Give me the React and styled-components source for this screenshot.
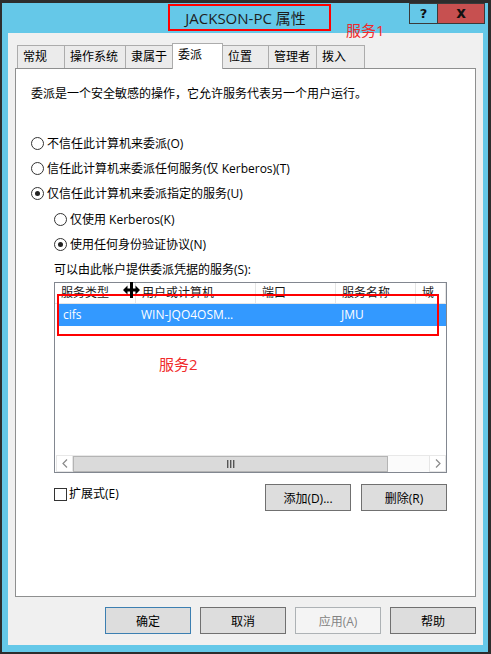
import React from "react";
import styled, { createGlobalStyle } from "styled-components";

const FONT = `"Open Sans", "Noto Sans CJK SC", sans-serif`;

const GlobalStyle = createGlobalStyle`
  html, body {
    margin: 0;
    padding: 0;
    background: #2d2d2d;
  }
  body {
    font-family: ${FONT};
    font-size: 12px;
    color: #000;
  }
  * {
    box-sizing: border-box;
  }
`;

const Window = styled.div`
  width: 491px;
  height: 654px;
  display: flex;
  flex-direction: column;
  background: #65c8e8;
  border-style: solid;
  border-color: #2d2d2d;
  border-width: 3px 3px 2px 2px;
`;

const TitleBar = styled.div`
  height: 30px;
  flex-shrink: 0;
  display: grid;
  grid-template-columns: 166px 163px 1fr;
`;

const Title = styled.div`
  grid-column: 2;
  margin-top: 1px;
  height: 27px;
  border: 2px solid #ff0000;
  padding-right: 8px;
  display: flex;
  align-items: center;
  justify-content: center;
  font-size: 15px;
  color: #1e1e1e;
  white-space: nowrap;
`;

const TitleRight = styled.div`
  display: flex;
  justify-content: space-between;
  padding-left: 15px;
`;

const Note = styled.span`
  position: relative;
  z-index: 2;
  font-size: 15px;
  line-height: 18px;
  color: #f02a2a;
  white-space: nowrap;
`;

const TitleNote = styled(Note)`
  margin-top: 18px;
`;

const CaptionButtons = styled.div`
  display: flex;
  align-self: flex-start;
  margin-right: 3px;
`;

const CaptionButton = styled.div`
  width: ${(p) => p.$width}px;
  height: 21px;
  margin-left: -1px;
  border: 1px solid #3a3a3a;
  background: ${(p) => (p.$close ? "#c75050" : "transparent")};
  display: flex;
  align-items: center;
  justify-content: center;
  font-family: "DejaVu Sans", sans-serif;
  font-weight: bold;
  font-size: ${(p) => (p.$close ? 15 : 13)}px;
  line-height: 1;
  color: #111;
`;

const Body = styled.div`
  flex: 1;
  margin: 0 5px 7px 6px;
  background: #f0f0f0;
  padding: 10px 7px 11px 7px;
  display: flex;
  flex-direction: column;
`;

const TabRow = styled.div`
  display: flex;
  align-items: flex-end;
  height: 25px;
  padding-left: 2px;
`;

const Tab = styled.div`
  position: relative;
  z-index: ${(p) => (p.$active ? 1 : 0)};
  width: ${(p) => p.$width}px;
  height: ${(p) => (p.$active ? 26 : 23)}px;
  margin-bottom: ${(p) => (p.$active ? -1 : 0)}px;
  margin-right: -1px;
  border: 1px solid #acacac;
  border-bottom: none;
  background: ${(p) => (p.$active ? "#ffffff" : "#ebebeb")};
  padding: 3px 0 0 5px;
  line-height: 16px;
  white-space: nowrap;
`;

const Panel = styled.div`
  flex: 1;
  background: #fff;
  border: 1px solid #8e8f8f;
  padding: 17px 15px 0 15px;
  display: flex;
  flex-direction: column;
`;

const Intro = styled.div`
  line-height: 16px;
`;

const Options = styled.div`
  margin-top: 33px;
  display: flex;
  flex-direction: column;
  gap: 9px;
`;

const OptionRow = styled.div`
  display: flex;
  align-items: center;
  height: 16px;
  margin-left: ${(p) => (p.$indent ? 23 : 0)}px;
  margin-top: ${(p) => p.$extra || 0}px;
  white-space: nowrap;
`;

const RadioCircle = styled.span`
  width: 13px;
  height: 13px;
  margin-right: 3px;
  border: 1px solid #333;
  border-radius: 50%;
  background: #fff;
  display: flex;
  align-items: center;
  justify-content: center;
  flex-shrink: 0;

  &::after {
    content: "";
    display: ${(p) => (p.$checked ? "block" : "none")};
    width: 5px;
    height: 5px;
    border-radius: 50%;
    background: #222;
  }
`;

const ListBox = styled.div`
  position: relative;
  margin: 5px 0 0 23px;
  width: 393px;
  height: 191px;
  border: 1px solid #828790;
  display: flex;
  flex-direction: column;
`;

const HeaderRow = styled.div`
  display: grid;
  grid-template-columns: 81px 120px 80px 80px 1fr;
  height: 21px;
  border-bottom: 1px solid #e5e5e5;
`;

const HeaderCell = styled.div`
  padding-left: 6px;
  line-height: 20px;
  border-right: 1px solid #e5e5e5;
  overflow: hidden;
  white-space: nowrap;
  color: #1a1a1a;
`;

const ListBody = styled.div`
  flex: 1;
`;

const DataRow = styled.div`
  display: grid;
  grid-template-columns: 78px 120px 80px 80px 1fr;
  height: 22px;
  margin-left: 2px;
  background: #3399ff;
  color: #fff;
`;

const DataCell = styled.div`
  padding-left: 6px;
  line-height: 22px;
  white-space: nowrap;
  overflow: hidden;
`;

const ScrollBar = styled.div`
  height: 17px;
  margin-left: 1px;
  display: flex;
  border-top: 1px solid #e8e8e8;
  background: #fff;
`;

const ScrollArrow = styled.div`
  width: 17px;
  display: flex;
  align-items: center;
  justify-content: center;
  background: #fff;
  border: 1px solid #e6e6e6;
  border-top: none;
`;

const Thumb = styled.div`
  width: ${(p) => p.$width}px;
  background: #dadada;
  border: 1px solid #b4b4b4;
  display: flex;
  align-items: center;
  justify-content: center;
`;

const Track = styled.div`
  flex: 1;
  background: #fbfbfb;
`;

const Box = styled.div`
  position: absolute;
  left: 2px;
  top: 11px;
  width: 382px;
  height: 42px;
  border: 2px solid #ff0000;
`;

const ListNote = styled(Note)`
  position: absolute;
  left: 104px;
  top: 72px;
`;

const Cursor = styled.svg`
  position: absolute;
  left: 68px;
  top: -1px;
  z-index: 3;
`;

const FooterRow = styled.div`
  margin: 11px 0 0 23px;
  width: 393px;
  display: flex;
  justify-content: space-between;
  align-items: flex-start;
`;

const CheckLabel = styled.div`
  display: flex;
  align-items: center;
  gap: 2px;
  margin-top: 2px;
  line-height: 16px;
`;

const CheckBox = styled.span`
  width: 13px;
  height: 13px;
  border: 1px solid #333;
  background: #fff;
`;

const ButtonGroup = styled.div`
  display: flex;
  justify-content: flex-end;
  gap: ${(p) => p.$gap}px;
`;

const Button = styled.div`
  width: 86px;
  height: 27px;
  display: flex;
  align-items: center;
  justify-content: center;
  font-size: 12px;
  background: ${(p) => (p.$disabled ? "#f4f4f4" : "#dddddd")};
  border: 1px solid
    ${(p) => (p.$default ? "#3c7fb1" : p.$disabled ? "#adb2b5" : "#707070")};
  color: ${(p) => (p.$disabled ? "#838383" : "#000")};
`;

const BottomBar = styled(ButtonGroup)`
  margin-top: 10px;
`;

const tabs = [
  { label: "常规", width: 48 },
  { label: "操作系统", width: 62 },
  { label: "隶属于", width: 48 },
  { label: "委派", width: 51, active: true },
  { label: "位置", width: 47 },
  { label: "管理者", width: 49 },
  { label: "拨入", width: 49 },
];

const Radio = ({ checked, indent, extra, children }) => (
  <OptionRow $indent={indent} $extra={extra}>
    <RadioCircle $checked={checked} />
    {children}
  </OptionRow>
);

const Chevron = ({ left }) => (
  <svg width="6" height="9" viewBox="0 0 6 9">
    <path
      d={left ? "M5 0.5 L1 4.5 L5 8.5" : "M1 0.5 L5 4.5 L1 8.5"}
      fill="none"
      stroke="#8a8a8a"
      strokeWidth="1.2"
    />
  </svg>
);

export default function App() {
  return (
    <>
      <GlobalStyle />
      <Window>
        <TitleBar>
          <Title>JACKSON-PC 属性</Title>
          <TitleRight>
            <TitleNote>服务1</TitleNote>
            <CaptionButtons>
              <CaptionButton $width={29}>?</CaptionButton>
              <CaptionButton $width={48} $close>
                x
              </CaptionButton>
            </CaptionButtons>
          </TitleRight>
        </TitleBar>

        <Body>
          <TabRow>
            {tabs.map((t) => (
              <Tab key={t.label} $width={t.width} $active={t.active}>
                {t.label}
              </Tab>
            ))}
          </TabRow>

          <Panel>
            <Intro>委派是一个安全敏感的操作，它允许服务代表另一个用户运行。</Intro>

            <Options>
              <Radio>不信任此计算机来委派(O)</Radio>
              <Radio>信任此计算机来委派任何服务(仅 Kerberos)(T)</Radio>
              <Radio checked>仅信任此计算机来委派指定的服务(U)</Radio>
              <Radio indent extra={1}>
                仅使用 Kerberos(K)
              </Radio>
              <Radio indent checked>
                使用任何身份验证协议(N)
              </Radio>
              <OptionRow $indent>可以由此帐户提供委派凭据的服务(S):</OptionRow>
            </Options>

            <ListBox>
              <HeaderRow>
                <HeaderCell>服务类型</HeaderCell>
                <HeaderCell>用户或计算机</HeaderCell>
                <HeaderCell>端口</HeaderCell>
                <HeaderCell>服务名称</HeaderCell>
                <HeaderCell>域</HeaderCell>
              </HeaderRow>
              <ListBody>
                <DataRow>
                  <DataCell>cifs</DataCell>
                  <DataCell>WIN-JQO4OSM...</DataCell>
                  <DataCell></DataCell>
                  <DataCell>JMU</DataCell>
                  <DataCell></DataCell>
                </DataRow>
              </ListBody>
              <ScrollBar>
                <ScrollArrow>
                  <Chevron left />
                </ScrollArrow>
                <Thumb $width={315}>
                  <svg width="9" height="8" viewBox="0 0 9 8">
                    <rect x="1" y="0" width="1.4" height="8" fill="#555" />
                    <rect x="4" y="0" width="1.4" height="8" fill="#555" />
                    <rect x="7" y="0" width="1.4" height="8" fill="#555" />
                  </svg>
                </Thumb>
                <Track />
                <ScrollArrow>
                  <Chevron />
                </ScrollArrow>
              </ScrollBar>

              <Box />
              <ListNote>服务2</ListNote>
              <Cursor width="17" height="16" viewBox="0 0 17 16">
                <rect x="7" y="0" width="3" height="16" fill="#000" />
                <polygon
                  points="0,8 4.5,3.5 4.5,6.5 7,6.5 7,9.5 4.5,9.5 4.5,12.5"
                  fill="#000"
                />
                <polygon
                  points="17,8 12.5,3.5 12.5,6.5 10,6.5 10,9.5 12.5,9.5 12.5,12.5"
                  fill="#000"
                />
              </Cursor>
            </ListBox>

            <FooterRow>
              <CheckLabel>
                <CheckBox />
                扩展式(E)
              </CheckLabel>
              <ButtonGroup $gap={10}>
                <Button>添加(D)...</Button>
                <Button>删除(R)</Button>
              </ButtonGroup>
            </FooterRow>
          </Panel>

          <BottomBar $gap={9}>
            <Button $default>确定</Button>
            <Button>取消</Button>
            <Button $disabled>应用(A)</Button>
            <Button>帮助</Button>
          </BottomBar>
        </Body>
      </Window>
    </>
  );
}
